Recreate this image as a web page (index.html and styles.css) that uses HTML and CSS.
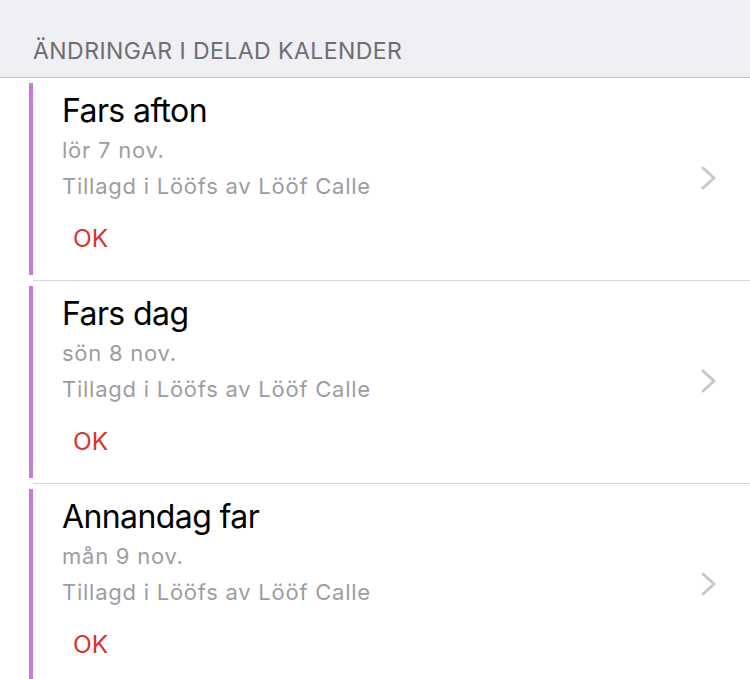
FILE: index.html
```html
<!DOCTYPE html>
<html lang="sv">
<head>
<meta charset="utf-8">
<link rel="stylesheet" href="styles.css">
</head>
<body>
<div class="header">ÄNDRINGAR I DELAD KALENDER</div>
<div class="list">
  <div class="row">
    <div class="bar"></div>
    <div class="body">
      <div class="text">
        <div class="title">Fars afton</div>
        <div class="sub">lör 7 nov.</div>
        <div class="sub">Tillagd i Lööfs av Lööf Calle</div>
        <div class="ok">OK</div>
      </div>
      <svg class="chev" width="18" height="24" viewBox="0 0 18 24"><path d="M3 2 L14 12 L3 22" fill="none" stroke="#c7c7cc" stroke-width="3" stroke-linecap="round" stroke-linejoin="round"/></svg>
    </div>
  </div>
  <div class="row">
    <div class="bar"></div>
    <div class="body">
      <div class="text">
        <div class="title">Fars dag</div>
        <div class="sub">sön 8 nov.</div>
        <div class="sub">Tillagd i Lööfs av Lööf Calle</div>
        <div class="ok">OK</div>
      </div>
      <svg class="chev" width="18" height="24" viewBox="0 0 18 24"><path d="M3 2 L14 12 L3 22" fill="none" stroke="#c7c7cc" stroke-width="3" stroke-linecap="round" stroke-linejoin="round"/></svg>
    </div>
  </div>
  <div class="row">
    <div class="bar"></div>
    <div class="body">
      <div class="text">
        <div class="title">Annandag far</div>
        <div class="sub">mån 9 nov.</div>
        <div class="sub">Tillagd i Lööfs av Lööf Calle</div>
        <div class="ok">OK</div>
      </div>
      <svg class="chev" width="18" height="24" viewBox="0 0 18 24"><path d="M3 2 L14 12 L3 22" fill="none" stroke="#c7c7cc" stroke-width="3" stroke-linecap="round" stroke-linejoin="round"/></svg>
    </div>
  </div>
</div>
</body>
</html>
```
FILE: styles.css
```css
html, body {
  margin: 0;
  padding: 0;
  background: #ffffff;
  font-family: Inter, "Liberation Sans", sans-serif;
}
body {
  width: 750px;
  height: 679px;
  overflow: hidden;
}
.header {
  height: 78px;
  box-sizing: border-box;
  background: #efeff4;
  border-bottom: 1px solid #c8c7cc;
  padding: 37px 0 0 33px;
  font-size: 23px;
  line-height: 28px;
  letter-spacing: 0.45px;
  color: #6d6d72;
}
.list {
  display: flex;
  flex-direction: column;
}
.row {
  display: flex;
  padding-left: 29px;
  height: 203px;
}
.bar {
  width: 4px;
  background: #c77ad8;
  margin: 5px 0 6px;
}
.body {
  flex: 1;
  display: flex;
  align-items: center;
  border-bottom: 1px solid #d8d8dc;
  padding-left: 29px;
}
.text {
  flex: 1;
  align-self: flex-start;
  padding-top: 13px;
}
.title {
  font-size: 32px;
  line-height: 40px;
  letter-spacing: -0.6px;
  color: #000;
  margin-bottom: 1px;
}
.sub {
  font-size: 22px;
  line-height: 36px;
  letter-spacing: 0.75px;
  color: #9d9da2;
}
.ok {
  font-size: 24.5px;
  line-height: 36px;
  color: #d8352d;
  padding-left: 11px;
  margin-top: 16px;
}
.chev {
  margin-right: 32px;
  margin-top: -2px;
}
```
